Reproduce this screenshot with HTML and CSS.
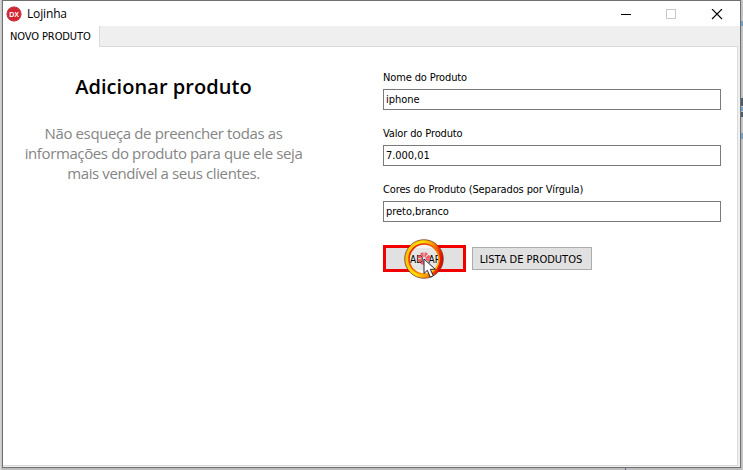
FILE: index.html
```html
<!DOCTYPE html>
<html lang="pt-BR">
<head>
<meta charset="utf-8">
<title>Lojinha</title>
<link rel="stylesheet" href="styles.css">
</head>
<body>
<div class="desktop">
  <svg class="backdrop" width="743" height="470" viewBox="0 0 743 470">
    <path d="M741 98h2v8h-2zm0 14h2v5h-2z" fill="#505b6a"/>
    <path d="M741 21h2v5h-2zm0 86h2v4h-2zm0 26h2v6h-2z" fill="#6e9fc8"/>
    <path d="M625 468h1v2h-1z" fill="#656b88"/>
  </svg>
  <main class="window">
    <header class="titlebar">
      <svg class="logo" width="16" height="16" viewBox="0 0 16 16">
        <circle cx="8" cy="8" r="7.5" fill="#d5232f"/>
        <circle cx="8" cy="8" r="6.8" fill="none" stroke="#b9434a" stroke-width="1"/>
        <text x="8" y="10.6" class="logo-text">DX</text>
      </svg>
      <h1 class="title">Lojinha</h1>
      <svg class="controls" width="104" height="12" viewBox="0 0 104 12" shape-rendering="crispEdges">
        <path d="M0 5h10v1H0z" fill="#000"/>
        <path d="M45.500 .5h9v9h-9z" fill="none" stroke="#c8c8c8"/>
        <path d="M91 0l10 10m0-10l-10 10" fill="none" stroke="#000" stroke-width="1.100" shape-rendering="auto"/>
      </svg>
    </header>
    <nav class="tabs"><span class="tab">NOVO PRODUTO</span></nav>
    <section class="page">
      <div class="intro">
        <h2 class="heading">Adicionar produto</h2>
        <p class="hint">Não esqueça de preencher todas as<br>informações do produto para que ele seja<br>mais vendível a seus clientes.</p>
      </div>
      <form class="form">
        <div class="field"><label for="nome">Nome do Produto</label><input id="nome" value="iphone"></div>
        <div class="field"><label for="valor">Valor do Produto</label><input id="valor" value="7.000,01"></div>
        <div class="field"><label for="cores">Cores do Produto (Separados por Vírgula)</label><input id="cores" value="preto,branco"></div>
        <div class="actions">
          <button type="button" class="save"></button>
          <button type="button" class="list">LISTA DE PRODUTOS</button>
          <svg class="pointer" width="44" height="44" viewBox="0 0 44 44">
            <defs>
              <linearGradient id="ring" x1="0" y1=".4" x2="1" y2=".6">
                <stop offset="0" stop-color="#ffc400"/><stop offset=".35" stop-color="#ffe000"/><stop offset=".65" stop-color="#f99a00"/><stop offset=".9" stop-color="#ea2a00"/><stop offset="1" stop-color="#dd0e00"/>
              </linearGradient>
              <linearGradient id="rim" x1="0" y1="0" x2="1" y2="1">
                <stop offset="0" stop-color="#e00000"/><stop offset=".5" stop-color="#f46a00"/><stop offset="1" stop-color="#ffd400"/>
              </linearGradient>
              <clipPath id="lens"><circle cx="22" cy="22" r="15"/></clipPath>
            </defs>
            <circle cx="22" cy="22" r="16" fill="#e5e5e5"/>
            <g clip-path="url(#lens)">
              <path d="M6 6h32v5H6zm0 27h32v5H6z" fill="#f8f4f4"/>
              <text x="8" y="26" class="lens-text">AD</text>
              <text x="26.500" y="26" class="lens-text">AR</text>
            </g>
            <circle cx="22" cy="22" r="17.200" fill="none" stroke="url(#ring)" stroke-width="4"/>
            <circle cx="22" cy="22" r="15" fill="none" stroke="url(#rim)" stroke-width="1.600"/>
            <circle cx="22" cy="22" r="19.300" fill="none" stroke="#6c1d12" stroke-width=".7"/>
            <circle cx="22" cy="21.500" r="4" fill="none" stroke="#ee5a60" stroke-width="4.600" stroke-dasharray="2.200 .942"/>
            <path d="M22 22v14.500l3.300-3.200 3 6.800 3-1.300-3-6.500h5z" fill="#fff" stroke="#26262c" stroke-width="1"/>
          </svg>
        </div>
      </form>
    </section>
  </main>
</div>
</body>
</html>
```
FILE: styles.css
```css
* { box-sizing: border-box; }
body { margin: 0; font: 11px/14px "DejaVu Sans Condensed", "DejaVu Sans", sans-serif; font-stretch: condensed; color: #000; }
.desktop { position: relative; width: 743px; height: 470px; padding: 0 2px 2px; overflow: hidden; background: linear-gradient(90deg, #ddd, #bdbdbd 2px, #bdbdbd 741px, #c9c9c9); }
.backdrop { position: absolute; left: 0; top: 0; }
.window { position: relative; width: 739px; height: 468px; border: 1px solid #707070; background: #efefef; display: flex; flex-direction: column; }
.titlebar { height: 25px; flex: none; background: #fff; display: flex; align-items: center; padding: 0 15px 0 3px; }
.logo { flex: none; }
.logo-text { font: bold 7px "Liberation Sans", sans-serif; fill: #fff; text-anchor: middle; }
.title { margin: 0 0 0 5px; font: 12px/16px "Open Sans", sans-serif; font-stretch: normal; letter-spacing: -.15px; }
.controls { margin-left: auto; position: relative; top: 1px; }
.tabs { height: 20px; flex: none; display: flex; }
.tab { width: 97px; height: 21px; position: relative; z-index: 1; background: #fff; border-right: 1px solid #dadada; padding: 4px 0 0 7px; white-space: nowrap; letter-spacing: -.1px; }
.page { flex: 1; margin: 0 2px 1px 0; border: solid #dadada; border-width: 1px 1px 1px 0; background: #fff; display: flex; }
.intro { width: 321px; padding: 26px 0 0; text-align: center; font-family: "Open Sans", sans-serif; font-stretch: normal; white-space: nowrap; }
.heading { margin: 0; font-size: 20px; line-height: 28px; font-weight: 600; letter-spacing: .06px; }
.hint { margin: 22px 0 0; font-size: 15px; line-height: 20px; letter-spacing: -.38px; color: #858585; }
.form { margin-left: 59px; width: 338px; padding-top: 23px; }
.field { height: 56px; white-space: nowrap; }
.field label { display: block; height: 19px; padding-top: 1px; letter-spacing: -.13px; }
.field input { display: block; width: 338px; height: 21px; border: 1px solid #7a7a7a; border-radius: 0; padding: 0 2px; margin: 0; font: inherit; letter-spacing: -.05px; background: #fff; color: #000; outline: 0; }
.actions { position: relative; display: flex; gap: 6px; padding-top: 7px; align-items: center; }
button { font: inherit; color: #000; padding: 0; border-radius: 0; background: #e1e1e1; white-space: nowrap; }
.save { width: 83px; height: 27px; border: 3px solid #f20000; }
.list { width: 120px; height: 23px; border: 1px solid #adadad; padding: 2px 2px 0 0; }
.pointer { position: absolute; left: 19px; top: -1px; }
.lens-text { font: 10px "DejaVu Sans Condensed", "DejaVu Sans", sans-serif; font-stretch: condensed; }
```
